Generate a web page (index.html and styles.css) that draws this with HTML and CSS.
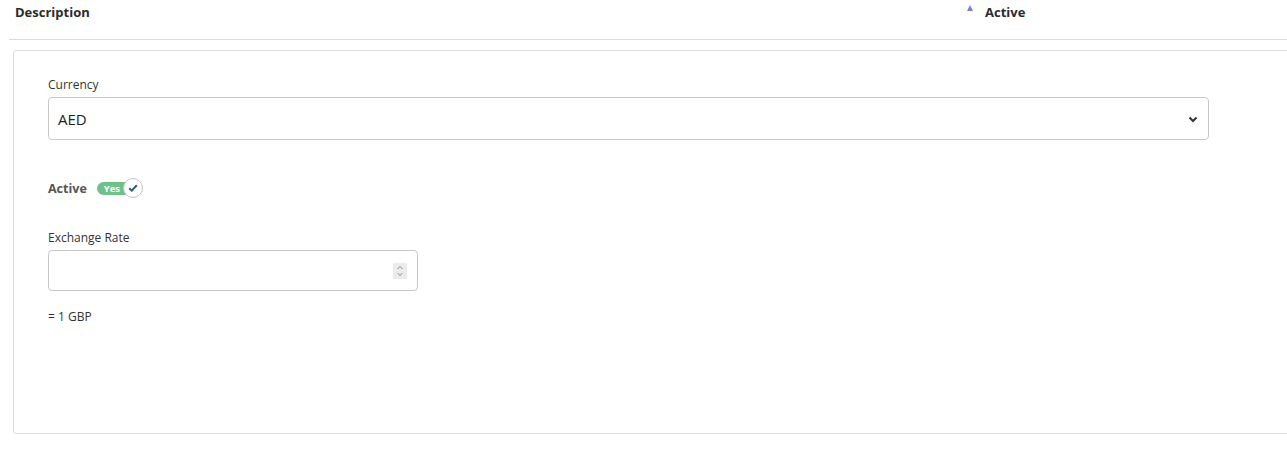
FILE: index.html
```html
<!DOCTYPE html>
<html lang="en">
<head>
  <meta charset="UTF-8">
  <title>Currencies</title>
  <link rel="stylesheet" href="styles.css">
</head>
<body>

  <!-- Table header -->
  <div class="grid-header">
    <div class="col col-desc">Description</div>
    <div class="col col-active"><span class="sort-arrow"></span>Active</div>
  </div>

  <!-- Edit form -->
  <div class="edit-card">
    <div class="field">
      <label class="field-label">Currency</label>
      <div class="select-box">
        <span>AED</span>
        <svg class="chevron" width="10" height="7" viewBox="0 0 10 7"><path d="M1.5 1.5 L5 5 L8.5 1.5" fill="none" stroke="#333" stroke-width="2"/></svg>
      </div>
    </div>

    <div class="field toggle-row">
      <span class="toggle-label">Active</span>
      <div class="toggle">
        <span class="toggle-pill">Yes</span>
        <span class="toggle-knob">
          <svg width="10" height="8" viewBox="0 0 10 8"><path d="M1.2 4.2 L3.8 6.6 L8.8 1.2" fill="none" stroke="#2f5d7c" stroke-width="2"/></svg>
        </span>
      </div>
    </div>

    <div class="field">
      <label class="field-label">Exchange Rate</label>
      <div class="number-box">
        <span class="spinner">
          <svg width="8" height="12" viewBox="0 0 8 12"><path d="M1.5 4 L4 1.5 L6.5 4 M1.5 8 L4 10.5 L6.5 8" fill="none" stroke="#888" stroke-width="1"/></svg>
        </span>
      </div>
      <div class="rate-note">= 1 GBP</div>
    </div>
  </div>

</body>
</html>
```

FILE: styles.css
```css
/* General Styling */
body {
  font-family: "Open Sans", "Noto Sans", sans-serif;
  background-color: #fff;
  color: #333;
  margin: 0;
  padding: 0;
  overflow: hidden;
}

/* Header */
.grid-header {
  display: flex;
  margin-left: 9px;
  height: 39px;
  border-bottom: 1px solid #dcdcdc;
  font-size: 13px;
  font-weight: bold;
  color: #2b2b2b;
}

.col {
  padding-top: 3px;
  line-height: 18px;
}

.col-desc {
  width: 952px;
  padding-left: 6px;
}

.col-active {
  position: relative;
  padding-left: 18px;
}

.sort-arrow {
  position: absolute;
  left: 0;
  top: 5px;
  width: 0;
  height: 0;
  border-left: 3.5px solid transparent;
  border-right: 3.5px solid transparent;
  border-bottom: 6px solid #7b7fdc;
}

/* Card */
.edit-card {
  margin: 10px 0 0 13px;
  width: 1290px;
  height: 384px;
  border: 1px solid #dcdcdc;
  border-radius: 3px;
  padding: 26px 0 0 34px;
  box-sizing: border-box;
}

.field-label {
  display: block;
  font-size: 12px;
  color: #333;
  line-height: 16px;
  margin-bottom: 4px;
}

.select-box {
  width: 1161px;
  height: 43px;
  box-sizing: border-box;
  border: 1px solid #c8c8c8;
  border-radius: 4px;
  display: flex;
  align-items: center;
  justify-content: space-between;
  padding: 0 10px 0 9px;
  font-size: 15px;
  color: #222;
}

.chevron {
  margin-top: 2px;
}

.toggle-row {
  display: flex;
  align-items: center;
  margin-top: 38px;
  height: 20px;
}

.toggle-label {
  font-size: 12.5px;
  font-weight: bold;
  color: #555;
  margin-right: 10px;
}

.toggle {
  display: flex;
  align-items: center;
  position: relative;
  width: 46px;
  height: 20px;
}

.toggle-pill {
  background-color: #6dc28a;
  color: #fff;
  font-size: 9.5px;
  font-weight: bold;
  height: 13px;
  line-height: 13px;
  width: 34px;
  border-radius: 7px;
  padding-left: 7px;
  box-sizing: border-box;
}

.toggle-knob {
  position: absolute;
  left: 26px;
  top: 0;
  width: 20px;
  height: 20px;
  box-sizing: border-box;
  border-radius: 50%;
  background: #fff;
  border: 1px solid #c4c4c4;
  display: flex;
  align-items: center;
  justify-content: center;
}

.toggle-row + .field {
  margin-top: 32px;
}

.number-box {
  width: 370px;
  height: 41px;
  box-sizing: border-box;
  border: 1px solid #c8c8c8;
  border-radius: 4px;
  display: flex;
  align-items: center;
  justify-content: flex-end;
  padding-right: 10px;
}

.spinner {
  width: 14px;
  height: 16px;
  background: #ececec;
  display: flex;
  align-items: center;
  justify-content: center;
}

.rate-note {
  font-size: 12px;
  color: #333;
  margin-top: 17px;
}
```
